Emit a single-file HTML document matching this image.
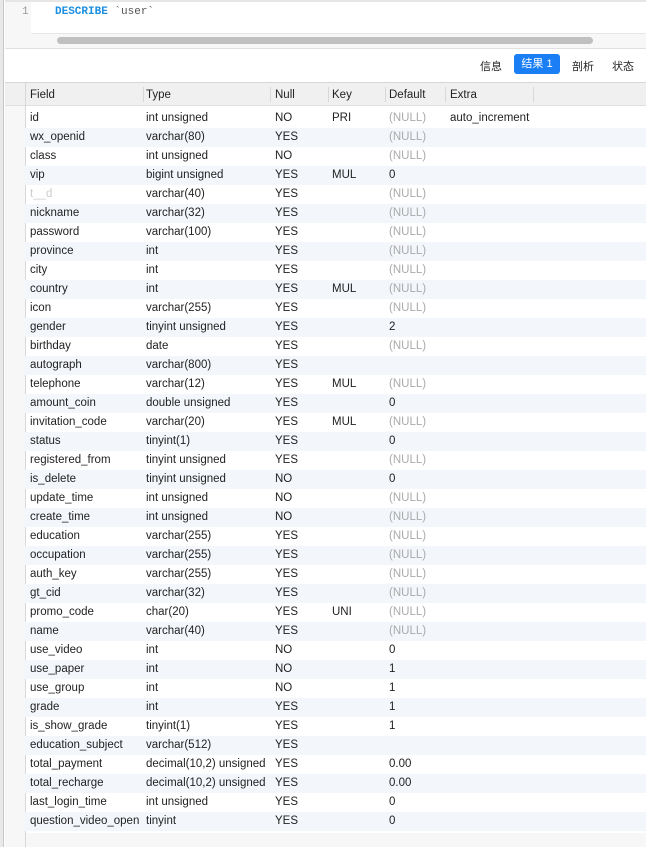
<!DOCTYPE html>
<html><head><meta charset="utf-8"><style>
*{margin:0;padding:0;box-sizing:border-box}
body{width:646px;height:847px;background:#fff;font-family:"Liberation Sans","Noto Sans CJK SC",sans-serif;font-size:11.5px;color:#222;position:relative;overflow:hidden}
.a{position:absolute}
.row{position:absolute;left:25px;width:621px;height:19px;line-height:19px}
.row.s{background:#f3f6fb}
.row span{position:absolute;white-space:nowrap}
.n{color:#aaa}
</style></head><body>
<div class="a" style="left:0;top:0;width:4px;height:847px;background:#e8e8e8;border-right:1px solid #c8c8c8"></div>
<div class="a" style="left:5px;top:0;width:641px;height:48px;background:#fff"></div>
<div class="a" style="left:5px;top:0;width:26px;height:48px;background:#f7f7f7"></div>
<div class="a" style="left:31px;top:33px;width:615px;height:15px;background:#f7f7f7;border-top:1px solid #e6e6e6"></div>
<div class="a" style="left:5px;top:0;width:641px;height:2px;background:#e6e6e6"></div>
<div class="a" style="left:22px;top:6px;font-family:'Liberation Mono',monospace;font-size:11px;color:#999">1</div>
<div class="a" style="left:55px;top:6px;font-family:'Liberation Mono',monospace;font-size:11px;color:#555"><b style="color:#1a8fe0;font-weight:bold">DESCRIBE</b> `user`</div>
<div class="a" style="left:57px;top:37px;width:536px;height:7px;border-radius:4px;background:#c0c0c0"></div>
<div class="a" style="left:5px;top:48px;width:641px;height:1px;background:#e0e0e0"></div>
<div class="a" style="left:480px;top:58px;font-size:11px">信息</div>
<div class="a" style="left:514px;top:54px;width:46px;height:20px;background:#1a7ef5;border-radius:3px;color:#fff;line-height:20px;text-align:center;font-size:11px">结果 1</div>
<div class="a" style="left:572px;top:58px;font-size:11px">剖析</div>
<div class="a" style="left:612px;top:58px;font-size:11px">状态</div>
<div class="a" style="left:5px;top:82px;width:641px;height:24px;background:#f0f0f0;border-top:1px solid #d6d6d6;border-bottom:1px solid #e0e0e0"></div>
<div class="a" style="left:5px;top:106px;width:641px;height:741px;background:#f7f7f7"></div>
<div class="a" style="left:25px;top:106px;width:621px;height:727px;background:#fff"></div>
<div class="a" style="left:25px;top:83px;width:1px;height:764px;background:#d8d8d8"></div>
<div class="a" style="top:84px;left:0;height:23px;line-height:23px;width:646px">
<span class="a" style="left:30px">Field</span><span class="a" style="left:146px">Type</span><span class="a" style="left:275px">Null</span><span class="a" style="left:332px">Key</span><span class="a" style="left:389px">Default</span><span class="a" style="left:450px">Extra</span>
<span class="a" style="left:143px;top:3px;width:1px;height:15px;background:#d8d8d8"></span>
<span class="a" style="left:270px;top:3px;width:1px;height:15px;background:#d8d8d8"></span>
<span class="a" style="left:328px;top:3px;width:1px;height:15px;background:#d8d8d8"></span>
<span class="a" style="left:385px;top:3px;width:1px;height:15px;background:#d8d8d8"></span>
<span class="a" style="left:445px;top:3px;width:1px;height:15px;background:#d8d8d8"></span>
<span class="a" style="left:533px;top:3px;width:1px;height:15px;background:#d8d8d8"></span>
</div>
<div id="t"></div>
<script>
var d=[["id","int unsigned","NO","PRI","N","auto_increment"],["wx_openid","varchar(80)","YES","","N",""],["class","int unsigned","NO","","N",""],["vip","bigint unsigned","YES","MUL","0",""],["<span style='color:#ccc'>t__d</span>","varchar(40)","YES","","N",""],["nickname","varchar(32)","YES","","N",""],["password","varchar(100)","YES","","N",""],["province","int","YES","","N",""],["city","int","YES","","N",""],["country","int","YES","MUL","N",""],["icon","varchar(255)","YES","","N",""],["gender","tinyint unsigned","YES","","2",""],["birthday","date","YES","","N",""],["autograph","varchar(800)","YES","","",""],["telephone","varchar(12)","YES","MUL","N",""],["amount_coin","double unsigned","YES","","0",""],["invitation_code","varchar(20)","YES","MUL","N",""],["status","tinyint(1)","YES","","0",""],["registered_from","tinyint unsigned","YES","","N",""],["is_delete","tinyint unsigned","NO","","0",""],["update_time","int unsigned","NO","","N",""],["create_time","int unsigned","NO","","N",""],["education","varchar(255)","YES","","N",""],["occupation","varchar(255)","YES","","N",""],["auth_key","varchar(255)","YES","","N",""],["gt_cid","varchar(32)","YES","","N",""],["promo_code","char(20)","YES","UNI","N",""],["name","varchar(40)","YES","","N",""],["use_video","int","NO","","0",""],["use_paper","int","NO","","1",""],["use_group","int","NO","","1",""],["grade","int","YES","","1",""],["is_show_grade","tinyint(1)","YES","","1",""],["education_subject","varchar(512)","YES","","",""],["total_payment","decimal(10,2) unsigned","YES","","0.00",""],["total_recharge","decimal(10,2) unsigned","YES","","0.00",""],["last_login_time","int unsigned","YES","","0",""],["question_video_open","tinyint","YES","","0",""]];
var h="";d.forEach(function(r,i){h+='<div class="row'+(i%2?' s':'')+'" style="top:'+(109+19*i)+'px"><span style="left:5px">'+r[0]+'</span><span style="left:121px">'+r[1]+'</span><span style="left:250px">'+r[2]+'</span><span style="left:307px">'+r[3]+'</span><span style="left:364px"'+(r[4]=="N"?' class="n">(NULL)':'>'+r[4])+'</span><span style="left:425px">'+r[5]+'</span></div>'});
document.getElementById("t").innerHTML=h;
</script>
</body></html>
